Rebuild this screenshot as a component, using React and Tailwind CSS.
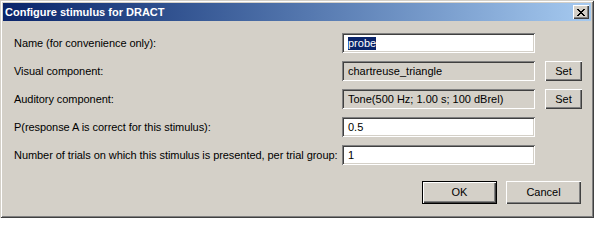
import React from "react";

const sunken =
  "shadow-[inset_1px_1px_0_#808080,inset_-1px_-1px_0_#ffffff,inset_2px_2px_0_#404040,inset_-2px_-2px_0_#d4d0c8]";
const raised =
  "shadow-[inset_1px_1px_0_#ffffff,inset_-1px_-1px_0_#404040,inset_-2px_-2px_0_#808080]";

const rows = [
  { label: "Name (for convenience only):", value: "probe", editable: true, selected: true },
  { label: "Visual component:", value: "chartreuse_triangle", set: true },
  { label: "Auditory component:", value: "Tone(500 Hz; 1.00 s; 100 dBrel)", set: true },
  { label: "P(response A is correct for this stimulus):", value: "0.5", editable: true },
  { label: "Number of trials on which this stimulus is presented, per trial group:", value: "1", editable: true },
];

function Field({ value, editable, selected }) {
  return (
    <div
      className={`h-[20px] w-[193px] flex items-center pl-[6px] ${sunken} ${
        editable ? "bg-white" : "bg-[#d4d0c8]"
      }`}
    >
      {selected ? (
        <span className="bg-[#0a246a] text-white leading-[13px]">{value}</span>
      ) : (
        <span>{value}</span>
      )}
    </div>
  );
}

function Button({ children, w = "w-[75px]", h = "h-[23px]", isDefault }) {
  return (
    <div
      className={`${w} ${h} flex items-center justify-center bg-[#d4d0c8] ${
        isDefault
          ? "shadow-[inset_0_0_0_1px_#000000,inset_2px_2px_0_#ffffff,inset_-2px_-2px_0_#404040,inset_-3px_-3px_0_#808080]"
          : raised
      }`}
    >
      {children}
    </div>
  );
}

export default function App() {
  return (
    <div
      className={`w-[594px] h-[218px] bg-[#d4d0c8] p-[3px] flex flex-col text-[11px] text-black font-['Liberation_Sans',sans-serif] shadow-[inset_1px_1px_0_#d4d0c8,inset_-1px_-1px_0_#404040,inset_2px_2px_0_#ffffff,inset_-2px_-2px_0_#808080]`}
    >
      {/* title bar */}
      <div className="h-[18px] flex items-center bg-linear-to-r from-[#0a246a] to-[#a6caf0] pl-[2px] pr-[2px]">
        <span className="text-white font-bold text-[11px] flex-1">Configure stimulus for DRACT</span>
        <div className={`w-[16px] h-[14px] flex items-center justify-center bg-[#d4d0c8] ${raised}`}>
          <svg width="8" height="7" viewBox="0 0 8 7" shapeRendering="crispEdges">
            <path
              d="M0 0h2v1H0zM6 0h2v1H6zM1 1h2v1H1zM5 1h2v1H5zM2 2h4v1H2zM3 3h2v1H3zM2 4h4v1H2zM1 5h2v1H1zM5 5h2v1H5zM0 6h2v1H0zM6 6h2v1H6z"
              fill="#000"
            />
          </svg>
        </div>
      </div>

      {/* body */}
      <div className="flex-1 flex flex-col pl-[11px] pt-[12px]">
        <div className="grid grid-cols-[328px_193px_10px_37px] auto-rows-[20px] gap-y-[8px] items-center">
          {rows.map((r, i) => (
            <React.Fragment key={i}>
              <span className="whitespace-nowrap tracking-[-0.06px]">{r.label}</span>
              <Field value={r.value} editable={r.editable} selected={r.selected} />
              <span />
              {r.set ? <Button w="w-[37px]" h="h-[20px]">Set</Button> : <span />}
            </React.Fragment>
          ))}
        </div>
        <div className="flex justify-end gap-[9px] pr-[10px] mt-[16px]">
          <Button isDefault>OK</Button>
          <Button>Cancel</Button>
        </div>
      </div>
    </div>
  );
}
